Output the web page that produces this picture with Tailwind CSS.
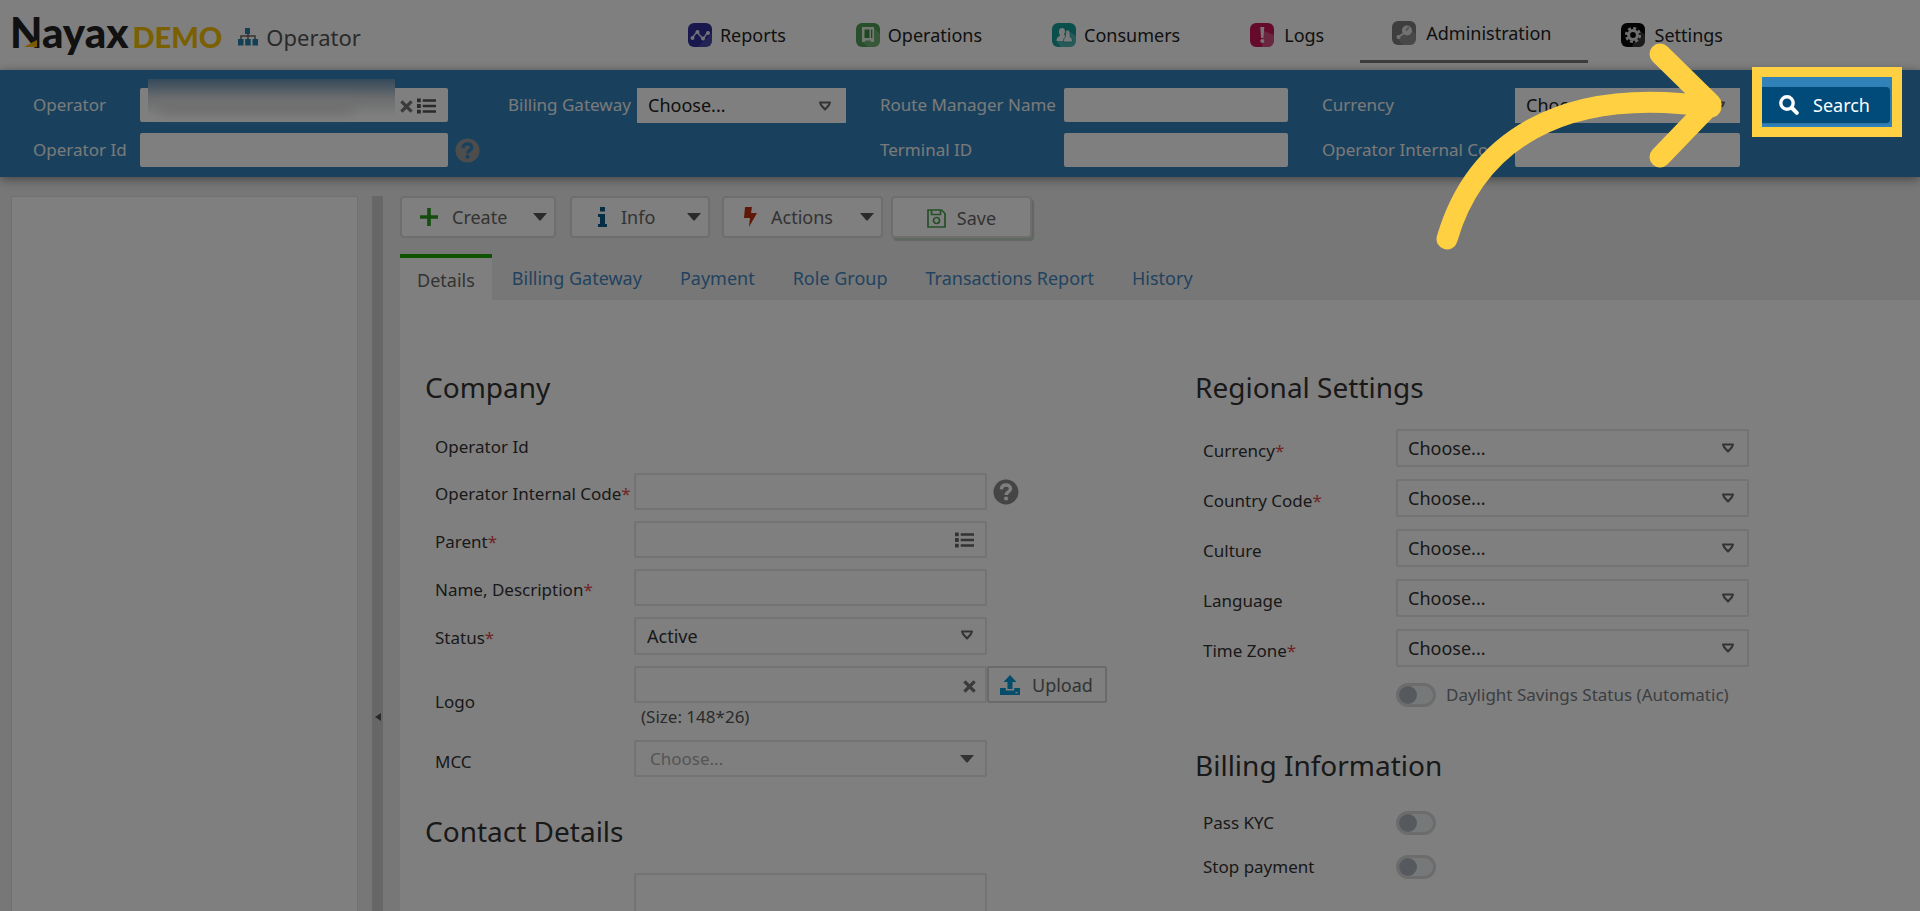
<!DOCTYPE html>
<html lang="en">
<head>
<meta charset="utf-8">
<meta name="viewport" content="width=device-width, initial-scale=1">
<title>Operator</title>
<script src="https://cdn.jsdelivr.net/npm/@tailwindcss/browser@4"></script>
</head>
<body class="relative flex h-screen flex-col overflow-hidden bg-[#efefef] font-['Noto_Sans','Open_Sans',sans-serif] text-[17px] leading-6 text-[#333]">

<!-- Shared shapes -->
<svg class="hidden" aria-hidden="true">
  <symbol id="list" viewBox="0 0 20 16"><path fill="currentColor" d="M0 0h4v4H0zM6 1h14v2.6H6zM0 6h4v4H0zM6 6.8h14v2.6H6zM0 12h4v4H0zM6 12.6h14v2.6H6z"/></symbol>
  <symbol id="cross" viewBox="0 0 14 14"><path fill="none" stroke="currentColor" stroke-width="3.6" d="M1.5 1.5l11 11M12.500 1.500l-11 11"/></symbol>
  <symbol id="help" viewBox="0 0 26 26"><circle cx="13" cy="13" r="12.500" fill="currentColor"/><path class="stroke-(--mark)" fill="none" stroke-width="3.400" d="M8.400 10.300C8.600 7.300 10.600 6 13 6c2.600 0 4.500 1.500 4.500 3.700 0 3.300-4.300 3-4.300 6.300"/><circle class="fill-(--mark)" cx="13.100" cy="19.500" r="2.100"/></symbol>
  <symbol id="open" viewBox="0 0 14 10"><path fill="none" stroke="currentColor" stroke-width="2" stroke-linejoin="round" d="M2 1.500h10l-1 2.500-4 4.500L3 4z"/></symbol>
  <symbol id="caret" viewBox="0 0 14 8"><path fill="currentColor" d="M0 0h14L8 7q-1 1-2 0z"/></symbol>
</svg>

<header class="flex h-[70px] shrink-0 items-start bg-white">
  <a href="#" aria-label="Nayax DEMO" class="relative ml-2.5 flex items-baseline pt-3 font-['Lato',sans-serif] leading-10">
    <span class="text-[42px] font-black text-[#222]">Nayax</span><span class="ml-1 text-[29px] font-black text-[#f5c000]">DEMO</span>
    <svg class="absolute left-3.5 top-[40px] h-[7px] w-[13px]" viewBox="0 0 13 7"><path fill="#f5b800" d="M0 7L9 2l4-2v7z"/></svg>
  </a>
  <div class="ml-4 flex items-center gap-2 pt-[17px]">
    <svg class="h-[18px] w-5" viewBox="0 0 20 18"><path fill="#2681ab" d="M7 0h5v6H7zM0 11h5.500v6.500H0zM7.200 11h5.500v6.500H7.200zM14.500 11H20v6.500h-5.500z"/><path fill="none" stroke="#666" stroke-width="1.500" d="M10 6v5M3 11V8h14v3"/></svg>
    <h1 class="text-[22px] leading-10 text-[#555]">Operator</h1>
  </div>
  <nav class="ml-auto mr-[162px] flex text-[18px] text-[#222]">
    <a href="#" class="flex h-[63px] items-center gap-2 px-[35px] pb-[3px] pt-2.5">
      <svg class="size-6" viewBox="0 0 24 24"><rect width="24" height="24" rx="6" fill="#302f9c"/><path d="M24 10v8a6 6 0 0 1-6 6h-8z" fill="#fff" opacity=".12"/><path fill="none" stroke="#d8d8f0" stroke-width="1.500" d="M4 15l5-6 6 7 5-7"/><g fill="#e6e6f5"><circle cx="4.500" cy="15" r="2"/><circle cx="9.500" cy="9" r="2"/><circle cx="15" cy="15.500" r="2"/><circle cx="20" cy="10" r="2"/></g></svg>Reports</a>
    <a href="#" class="flex h-[63px] items-center gap-2 px-[35px] pb-[3px] pt-2.5">
      <svg class="size-6" viewBox="0 0 24 24"><rect width="24" height="24" rx="6" fill="#4f9f54"/><path d="M18 5l6 6v7a6 6 0 0 1-6 6H12l-5-5z" fill="#fff" opacity=".18"/><path fill="#e4f0e4" d="M6 4h12v15h-2.500l-1.500-1.500h-4L8.500 19H6z"/><path fill="#3f9145" d="M8.500 6.500h5V15h-5zM15 6.500h1.300V15H15z"/></svg>Operations</a>
    <a href="#" class="flex h-[63px] items-center gap-2 px-[35px] pb-[3px] pt-2.5">
      <svg class="size-6" viewBox="0 0 24 24"><rect width="24" height="24" rx="6" fill="#159f98"/><path d="M18 9l6 4v5a6 6 0 0 1-6 6H9l-4-5z" fill="#fff" opacity=".25"/><path fill="#f2f7f7" d="M10 5c2 0 3 1.500 3 3.200 0 1.500-.6 2.300-1 3.300.5.800 1.500 1.300 2 1.800L13 18H4.500c0-3 1-4 3-5 .7-.4.700-1 0-2C6.900 10 7 9.500 7 8.200 7 6.500 8 5 10 5z"/><path fill="#f2f7f7" stroke="#159f98" stroke-width=".8" d="M15 7c2.500 0 3 2 3 4 0 1 .7 2.200 0 3 1.800.6 2.500 2 2.500 5h-9c0-3 .5-4.200 2.200-5-.8-.8 0-2 0-3 0-2 0-4 1.300-4z"/></svg>Consumers</a>
    <a href="#" class="flex h-[63px] items-center gap-2.5 pb-[3px] pl-[35px] pr-9 pt-2.5">
      <svg class="size-6" viewBox="0 0 24 24"><rect width="24" height="24" rx="6" fill="#cc1456"/><path d="M14 8l10 4v6a6 6 0 0 1-6 6h-6z" fill="#fff" opacity=".25"/><path fill="#f6e6ec" d="M10.300 4h4l-.8 11h-2.400z"/><circle cx="12.300" cy="18" r="2" fill="#f6e6ec"/></svg>Logs</a>
    <a href="#" aria-current="page" class="flex h-[63px] items-center gap-2.5 border-b-[3px] border-[#777b7b] pl-8 pr-9 pt-1.5">
      <svg class="size-6" viewBox="0 0 24 24"><rect width="24" height="24" rx="6" fill="#7c7d7f"/><path d="M19 8l5 5v5a6 6 0 0 1-6 6h-7l-5-6z" fill="#fff" opacity=".15"/><circle cx="15" cy="9.500" r="5" fill="#e5e5e5"/><path stroke="#e5e5e5" stroke-width="2" d="M11.500 12.500L6.500 16"/><circle cx="6.500" cy="16" r="2" fill="#e5e5e5"/><path stroke="#aaa" stroke-width="2" d="M17 6l-3 3.500"/></svg>Administration</a>
    <a href="#" class="flex h-[63px] items-center gap-2.5 pb-[3px] pl-[33px] pr-[35px] pt-2.5">
      <svg class="size-6" viewBox="0 0 24 24"><rect width="24" height="24" rx="6" fill="#050505"/><path d="M18 8l6 3v7a6 6 0 0 1-6 6h-7z" fill="#fff" opacity=".2"/><circle cx="12" cy="12" r="6.800" fill="none" stroke="#ddd" stroke-width="2.600" stroke-dasharray="3 2.340"/><circle cx="12" cy="12" r="4.400" fill="none" stroke="#ddd" stroke-width="3"/></svg>Settings</a>
  </nav>
</header>

<form class="relative z-10 grid shrink-0 grid-cols-[107px_308fr_60px_129px_209fr_34px_184px_224fr_34px_193px_225fr_22px_130px] items-center gap-y-2.5 bg-[#3282ba] pb-2.5 pl-[33px] pr-7 pt-[17px] text-[#f4f4f4] shadow-[0_2px_10px_rgba(0,0,0,0.45)]">
  <label for="s-op">Operator</label>
  <div class="relative">
    <input id="s-op" class="block h-[34px] w-full rounded-xs bg-white px-3 text-[18px] text-[#333]">
    <div class="absolute -top-[9px] left-2 right-[53px] h-[38px] bg-linear-to-b from-[#6894b3] via-[#d6d9dc] to-white"></div>
    <div class="absolute left-5 right-24 top-3 h-3.5 bg-[#dedede] blur-[6px]"></div>
    <svg class="absolute right-[35px] top-3 h-[13px] w-[13px] text-[#777]"><use href="#cross"/></svg>
    <svg class="absolute right-3 top-[10px] h-4 w-[19px] text-[#555]"><use href="#list"/></svg>
  </div>
  <span></span>
  <label for="s-bg">Billing Gateway</label>
  <div class="relative">
    <select id="s-bg" class="block h-[35px] w-full appearance-none bg-white px-[11px] text-[18px] text-[#222]"><option>Choose...</option></select>
    <svg class="pointer-events-none absolute right-3.5 top-[13px] h-[10px] w-[14px] text-[#666]"><use href="#open"/></svg>
  </div>
  <span></span>
  <label for="s-rm">Route Manager Name</label>
  <input id="s-rm" class="h-[34px] w-full rounded-xs bg-white px-3 text-[#333]">
  <span></span>
  <label for="s-cu">Currency</label>
  <div class="relative">
    <select id="s-cu" class="block h-[35px] w-full appearance-none bg-white px-[11px] text-[18px] text-[#222]"><option>Choose...</option></select>
    <svg class="pointer-events-none absolute right-3.5 top-[13px] h-[10px] w-[14px] text-[#666]"><use href="#open"/></svg>
  </div>
  <span></span>
  <div class="relative">
    <button type="button" class="-ml-2 flex h-9 w-[136px] items-center gap-3.5 rounded-sm bg-[#004b79] pl-[25px] text-[18px] text-white shadow-sm">
      <svg class="size-5" viewBox="0 0 20 20"><circle cx="8" cy="8" r="6.200" fill="none" stroke="#fff" stroke-width="3.400"/><path stroke="#fff" stroke-width="4" stroke-linecap="round" d="M13.500 13.500l4.300 4.300"/></svg>Search</button>
    <!-- Walkthrough spotlight: frame, dimmed surroundings, pointer -->
    <div class="pointer-events-none absolute -inset-x-2.5 -bottom-3.5 -top-5 z-20 border-[10px] border-[#ffd042] shadow-[0_0_0_3000px_rgba(0,0,0,0.5)]"></div>
    <svg class="pointer-events-none absolute -top-[47px] right-full z-30 mr-8 h-[215px] w-[300px]" viewBox="1430 40 300 215" fill="none" stroke="#ffd042" stroke-width="21" stroke-linecap="round" stroke-linejoin="round"><path d="M1447 239C1475 143 1560 85 1711 107M1660 54L1711 104L1660 157"/></svg>
  </div>

  <label for="s-id">Operator Id</label>
  <input id="s-id" class="h-[34px] w-full rounded-xs bg-white px-3 text-[#333]">
  <svg class="ml-[7px] size-[25px] text-[#9a9a9a] [--mark:#3282ba]" role="img" aria-label="Help"><use href="#help"/></svg>
  <span class="col-span-3"></span>
  <label for="s-ti">Terminal ID</label>
  <input id="s-ti" class="h-[34px] w-full rounded-xs bg-white px-3 text-[#333]">
  <span></span>
  <label for="s-ic" class="whitespace-nowrap">Operator Internal Code</label>
  <input id="s-ic" class="h-[34px] w-full rounded-xs bg-white px-3 text-[#333]">
</form>

<main class="flex min-h-0 flex-1 overflow-hidden pt-[19px]">
  <aside class="ml-[11px] w-[347px] shrink-0 border-x border-t border-[#e2e2e2] bg-white"></aside>
  <div class="ml-[14px] flex w-[11px] shrink-0 justify-center bg-[#cecece] pt-[517px]">
    <svg class="h-2 w-1.5" viewBox="0 0 6 8"><path fill="#555" d="M6 0v8L0 4z"/></svg>
  </div>

  <div class="ml-[17px] flex min-w-0 flex-1 flex-col">
    <div class="flex h-[42px] shrink-0 text-[18px] text-[#666]">
      <button class="mr-[14px] flex w-[156px] items-center rounded-sm border-2 border-[#dcdcdc] bg-white pl-[18px] pr-[7px]">
        <svg class="mr-3.5 size-[18px]" viewBox="0 0 18 18"><path stroke="#2b9a1e" stroke-width="3.600" d="M9 0v18M0 9h18"/></svg>Create
        <svg class="ml-auto h-2 w-3.5 text-[#555]"><use href="#caret"/></svg></button>
      <button class="mr-3 flex w-[140px] items-center rounded-sm border-2 border-[#dcdcdc] bg-white pl-[26px] pr-[7px]">
        <svg class="mr-3.5 h-5 w-[9px]" viewBox="0 0 9 20"><path fill="#0b5c8c" d="M2 0h5v4.500H2zM0 7h7v10h2v3H0v-3h2v-7H0z"/></svg>Info
        <svg class="ml-auto h-2 w-3.5 text-[#555]"><use href="#caret"/></svg></button>
      <button class="mr-2 flex w-[161px] items-center rounded-sm border-2 border-[#dcdcdc] bg-white pl-5 pr-[7px]">
        <svg class="mr-3.5 h-5 w-[13px]" viewBox="0 0 13 20"><path fill="#c03010" d="M1 0h7L7 6h6L5 20l1-9H0z"/></svg>Actions
        <svg class="ml-auto h-2 w-3.5 text-[#555]"><use href="#caret"/></svg></button>
      <button class="flex w-[141px] items-center justify-center gap-[11px] rounded-sm border-2 border-[#dcdcdc] bg-white pt-0.5 shadow-[2px_3px_1px_#c3cec3]">
        <svg class="size-[19px]" viewBox="0 0 19 19" fill="none" stroke="#4aa050" stroke-width="1.700"><path d="M1 1h13.500L18 4.500V18H1z"/><path d="M4.500 1v4.500h9V1"/><circle cx="9.500" cy="11.500" r="3"/></svg>Save</button>
    </div>

    <nav class="mt-4 flex h-[46px] shrink-0 text-[18px] text-[#4386c0]">
      <a href="#" aria-current="page" class="border-t-4 border-[#1fa500] bg-white px-[17px] pt-2.5 text-[#666]">Details</a>
      <a href="#" class="px-5 pt-3">Billing Gateway</a>
      <a href="#" class="px-[18px] pt-3">Payment</a>
      <a href="#" class="px-5 pt-3">Role Group</a>
      <a href="#" class="px-[18px] pt-3">Transactions Report</a>
      <a href="#" class="px-5 pt-3">History</a>
    </nav>

    <form class="grid flex-1 grid-cols-[770fr_725fr] content-start bg-white pl-[25px] pt-[69px]">
      <div>
        <h2 class="text-[28px] leading-9">Company</h2>
        <div class="mt-[30px] grid grid-cols-[199px_353fr_208fr] items-center gap-y-[11px] pl-2.5">
          <span class="col-span-3 h-[27px]">Operator Id</span>

          <label for="f-ic" class="whitespace-nowrap pt-1">Operator Internal Code<span class="text-[#e04848]">*</span></label>
          <input id="f-ic" class="h-[37px] w-full rounded-xs border-2 border-[#e6e6e6] bg-white px-2.5">
          <svg class="ml-1.5 size-[26px] text-[#8a8a8a] [--mark:#fff]" role="img" aria-label="Help"><use href="#help"/></svg>

          <label for="f-pa" class="pt-1">Parent<span class="text-[#e04848]">*</span></label>
          <div class="relative">
            <input id="f-pa" class="block h-[37px] w-full rounded-xs border-2 border-[#e6e6e6] bg-white px-2.5">
            <svg class="absolute right-[13px] top-[11px] h-4 w-[19px] text-[#666]"><use href="#list"/></svg>
          </div>
          <span></span>

          <label for="f-na" class="pt-1">Name, Description<span class="text-[#e04848]">*</span></label>
          <input id="f-na" class="h-[37px] w-full rounded-xs border-2 border-[#e6e6e6] bg-white px-2.5">
          <span></span>

          <label for="f-st" class="pt-1">Status<span class="text-[#e04848]">*</span></label>
          <div class="relative">
            <select id="f-st" class="block h-[38px] w-full appearance-none rounded-xs border-2 border-[#e6e6e6] bg-white px-[11px] text-[18px] text-[#333]"><option>Active</option></select>
            <svg class="pointer-events-none absolute right-[13px] top-[13px] h-[10px] w-[14px] text-[#666]"><use href="#open"/></svg>
          </div>
          <span></span>

          <label for="f-lo" class="pt-2">Logo</label>
          <div>
            <div class="relative">
              <input id="f-lo" class="block h-[37px] w-full rounded-xs border-2 border-[#e6e6e6] bg-white px-2.5">
              <svg class="absolute right-[11px] top-[14px] h-[13px] w-[13px] text-[#777]"><use href="#cross"/></svg>
            </div>
            <p class="mt-0.5 pl-[7px] text-[17px] text-[#555]">(Size: 148*26)</p>
          </div>
          <button type="button" class="flex h-[37px] w-[120px] items-center gap-3 self-start rounded-xs border-2 border-[#d4d4d4] bg-white pl-[11px] text-[18px] text-[#666]">
            <svg class="size-5" viewBox="0 0 20 20"><path fill="#0a9ad4" d="M10 0l6.500 7H12.500v7h-5V7H3.500zM0 13h5.800v2.500h8.400V13H20v7H0z"/><path fill="#fff" d="M15.500 17h2v1.200h-2z"/></svg>Upload</button>

          <label for="f-mc" class="pt-1.5">MCC</label>
          <div class="relative">
            <select id="f-mc" class="block h-[37px] w-full appearance-none rounded-xs border-2 border-[#e6e6e6] bg-white px-[14px] text-[17px] text-[#aaa]"><option>Choose...</option></select>
            <svg class="pointer-events-none absolute right-[13px] top-[15px] h-2 w-3.5 text-[#666]"><use href="#caret"/></svg>
          </div>
        </div>

        <h2 class="mt-9 text-[28px] leading-9">Contact Details</h2>
        <div class="mt-6 grid grid-cols-[199px_353fr_208fr] pl-2.5">
          <span></span>
          <textarea aria-label="Contact details" class="h-24 w-full resize-none rounded-xs border-2 border-[#e6e6e6] bg-white"></textarea>
        </div>
      </div>

      <div>
        <h2 class="text-[28px] leading-9">Regional Settings</h2>
        <div class="mt-6 grid grid-cols-[193px_353fr_171fr] items-center gap-y-3 pl-2">
          <label for="r-cu" class="pt-1.5">Currency<span class="text-[#e04848]">*</span></label>
          <div class="relative">
            <select id="r-cu" class="block h-[38px] w-full appearance-none rounded-xs border-2 border-[#e6e6e6] bg-white px-[10px] text-[18px] text-[#333]"><option>Choose...</option></select>
            <svg class="pointer-events-none absolute right-[14px] top-[14px] h-[10px] w-[14px] text-[#666]"><use href="#open"/></svg>
          </div>
          <label for="r-cc" class="col-start-1 pt-1.5">Country Code<span class="text-[#e04848]">*</span></label>
          <div class="relative">
            <select id="r-cc" class="block h-[38px] w-full appearance-none rounded-xs border-2 border-[#e6e6e6] bg-white px-[10px] text-[18px] text-[#333]"><option>Choose...</option></select>
            <svg class="pointer-events-none absolute right-[14px] top-[14px] h-[10px] w-[14px] text-[#666]"><use href="#open"/></svg>
          </div>
          <label for="r-cl" class="col-start-1 pt-1.5">Culture</label>
          <div class="relative">
            <select id="r-cl" class="block h-[38px] w-full appearance-none rounded-xs border-2 border-[#e6e6e6] bg-white px-[10px] text-[18px] text-[#333]"><option>Choose...</option></select>
            <svg class="pointer-events-none absolute right-[14px] top-[14px] h-[10px] w-[14px] text-[#666]"><use href="#open"/></svg>
          </div>
          <label for="r-la" class="col-start-1 pt-1.5">Language</label>
          <div class="relative">
            <select id="r-la" class="block h-[38px] w-full appearance-none rounded-xs border-2 border-[#e6e6e6] bg-white px-[10px] text-[18px] text-[#333]"><option>Choose...</option></select>
            <svg class="pointer-events-none absolute right-[14px] top-[14px] h-[10px] w-[14px] text-[#666]"><use href="#open"/></svg>
          </div>
          <label for="r-tz" class="col-start-1 pt-1.5">Time Zone<span class="text-[#e04848]">*</span></label>
          <div class="relative">
            <select id="r-tz" class="block h-[38px] w-full appearance-none rounded-xs border-2 border-[#e6e6e6] bg-white px-[10px] text-[18px] text-[#333]"><option>Choose...</option></select>
            <svg class="pointer-events-none absolute right-[14px] top-[14px] h-[10px] w-[14px] text-[#666]"><use href="#open"/></svg>
          </div>
          <label class="col-start-2 mt-1 flex items-center gap-2.5 whitespace-nowrap text-[#777c84]">
            <input type="checkbox" class="h-6 w-10 shrink-0 appearance-none rounded-full border-[3px] border-[#d8d8d8] bg-[#eff1f3] before:block before:size-[18px] before:rounded-full before:bg-[#adb3bb] checked:before:ml-4">Daylight Savings Status (Automatic)</label>
        </div>

        <h2 class="mt-10 text-[28px] leading-9">Billing Information</h2>
        <div class="mt-7 grid grid-cols-[193px_1fr] items-center gap-y-5 pl-2">
          <label for="b-ky">Pass KYC</label>
          <input id="b-ky" type="checkbox" class="h-6 w-10 appearance-none rounded-full border-[3px] border-[#d8d8d8] bg-[#eff1f3] before:block before:size-[18px] before:rounded-full before:bg-[#adb3bb] checked:before:ml-4">
          <label for="b-sp">Stop payment</label>
          <input id="b-sp" type="checkbox" class="h-6 w-10 appearance-none rounded-full border-[3px] border-[#d8d8d8] bg-[#eff1f3] before:block before:size-[18px] before:rounded-full before:bg-[#adb3bb] checked:before:ml-4">
        </div>
      </div>
    </form>
  </div>
</main>
</body>
</html>
